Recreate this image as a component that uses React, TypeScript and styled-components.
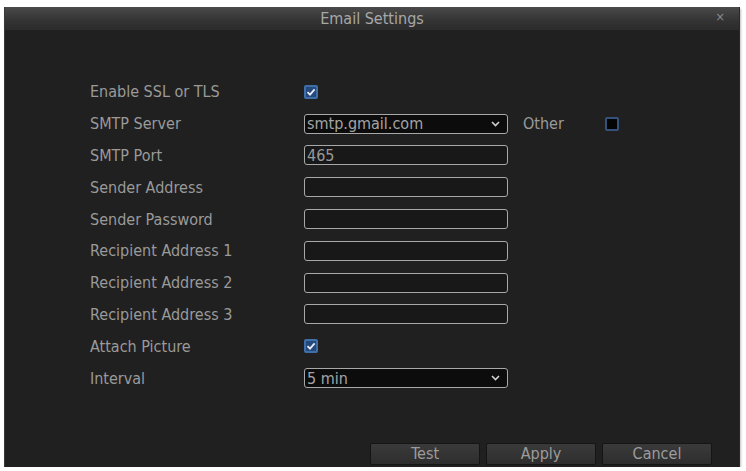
import React, { useState } from "react";
import styled, { createGlobalStyle } from "styled-components";

const FONT = `"DejaVu Sans Condensed", "DejaVu Sans", sans-serif`;

const GlobalStyle = createGlobalStyle`
  html, body {
    margin: 0;
    padding: 0;
    background: #ffffff;
  }
  body {
    font-family: ${FONT};
  }
`;

const rows = [
  "Enable SSL or TLS",
  "SMTP Server",
  "SMTP Port",
  "Sender Address",
  "Sender Password",
  "Recipient Address 1",
  "Recipient Address 2",
  "Recipient Address 3",
  "Attach Picture",
  "Interval",
];

const Check = ({ checked }: { checked: boolean }) => (
  <CheckBox $checked={checked}>
    {checked && (
      <svg width="10" height="10" viewBox="0 0 10 10">
        <path d="M1.5 5.2 L4 7.6 L8.6 2.4" fill="none" stroke="#e8eef8" strokeWidth="1.8" />
      </svg>
    )}
  </CheckBox>
);

const Caret = () => (
  <svg width="9" height="6" viewBox="0 0 9 6">
    <path d="M1 1 L4.5 4.5 L8 1" fill="none" stroke="#d0d0d0" strokeWidth="1.6" />
  </svg>
);

const App = () => {
  const [port, setPort] = useState("465");

  return (
    <>
      <GlobalStyle />
      <Dialog>
        <TitleBar>
          <Title>Email Settings</Title>
          <Close>×</Close>
        </TitleBar>
        <Body>
          <Form>
            <Label>{rows[0]}</Label>
            <Field>
              <Check checked />
            </Field>

            <Label>{rows[1]}</Label>
            <Field>
              <Select>
                <SelectText>smtp.gmail.com</SelectText>
                <Caret />
              </Select>
              <Other>Other</Other>
              <Check checked={false} />
            </Field>

            <Label>{rows[2]}</Label>
            <Field>
              <Input value={port} onChange={({ target: { value } }) => setPort(value)} />
            </Field>

            {rows.slice(3, 8).map((el, index) => (
              <React.Fragment key={index}>
                <Label>{el}</Label>
                <Field>
                  <Input type={el.includes("Password") ? "password" : "text"} />
                </Field>
              </React.Fragment>
            ))}

            <Label>{rows[8]}</Label>
            <Field>
              <Check checked />
            </Field>

            <Label>{rows[9]}</Label>
            <Field>
              <Select>
                <SelectText>5 min</SelectText>
                <Caret />
              </Select>
            </Field>
          </Form>
          <Buttons>
            <Button>Test</Button>
            <Button>Apply</Button>
            <Button>Cancel</Button>
          </Buttons>
        </Body>
      </Dialog>
    </>
  );
};

const Dialog = styled.div`
  margin: 7px 0 0 4px;
  width: 736px;
  height: 460px;
  display: flex;
  flex-direction: column;
  background: #202020;
  border-left: 1px solid #3a3a3a;
  border-right: 1px solid #2a2a2a;
  box-shadow: 1px 2px 2px rgba(0, 0, 0, 0.25);
  box-sizing: border-box;
`;

const TitleBar = styled.div`
  position: relative;
  height: 23px;
  flex-shrink: 0;
  display: flex;
  align-items: center;
  justify-content: center;
  background: linear-gradient(#4a4a4a, #333333 60%, #2b2b2b);
`;

const Title = styled.div`
  font-size: 16px;
  color: #a8a8a8;
`;

const Close = styled.div`
  position: absolute;
  right: 14px;
  top: 2px;
  font-size: 13px;
  color: #8a8a8a;
`;

const Body = styled.div`
  flex: 1;
  display: flex;
  flex-direction: column;
  padding: 46px 0 2px 85px;
`;

const Form = styled.div`
  display: grid;
  grid-template-columns: 214px 1fr;
  grid-auto-rows: 31.8px;
  align-items: center;
`;

const Label = styled.div`
  font-size: 16px;
  color: #9a9a9a;
  white-space: nowrap;
`;

const Field = styled.div`
  display: flex;
  align-items: center;
`;

const CheckBox = styled.div<{ $checked: boolean }>`
  width: 14px;
  height: 14px;
  box-sizing: border-box;
  border: 2px solid ${(p) => (p.$checked ? "#3f6fa8" : "#34527a")};
  border-radius: 2px;
  background: ${(p) => (p.$checked ? "#24497a" : "#050505")};
  display: flex;
  align-items: center;
  justify-content: center;
`;

const Input = styled.input`
  width: 204px;
  height: 20px;
  box-sizing: border-box;
  border: 1px solid #a8a8a8;
  border-radius: 3px;
  background: #181818;
  color: #9a9a9a;
  font-family: ${FONT};
  font-size: 16px;
  padding: 0 2px;
  outline: none;
`;

const Select = styled.div`
  width: 204px;
  height: 20px;
  box-sizing: border-box;
  border: 1px solid #a8a8a8;
  border-radius: 3px;
  background: #0c0c0c;
  display: flex;
  align-items: center;
  justify-content: space-between;
  padding: 0 7px 0 2px;
`;

const SelectText = styled.span`
  font-size: 16px;
  color: #a4a4a4;
`;

const Other = styled.span`
  font-size: 16px;
  color: #9a9a9a;
  margin: 0 41px 0 15px;
`;

const Buttons = styled.div`
  margin-top: auto;
  display: flex;
  justify-content: flex-end;
  gap: 6px;
  padding-right: 27px;
`;

const Button = styled.button`
  width: 110px;
  height: 22px;
  border: 1px solid #151515;
  border-radius: 2px;
  background: linear-gradient(#3a3a3a, #2e2e2e);
  color: #9c9c9c;
  font-family: ${FONT};
  font-size: 16px;
  padding: 0;
  line-height: 20px;
`;

export default App;
